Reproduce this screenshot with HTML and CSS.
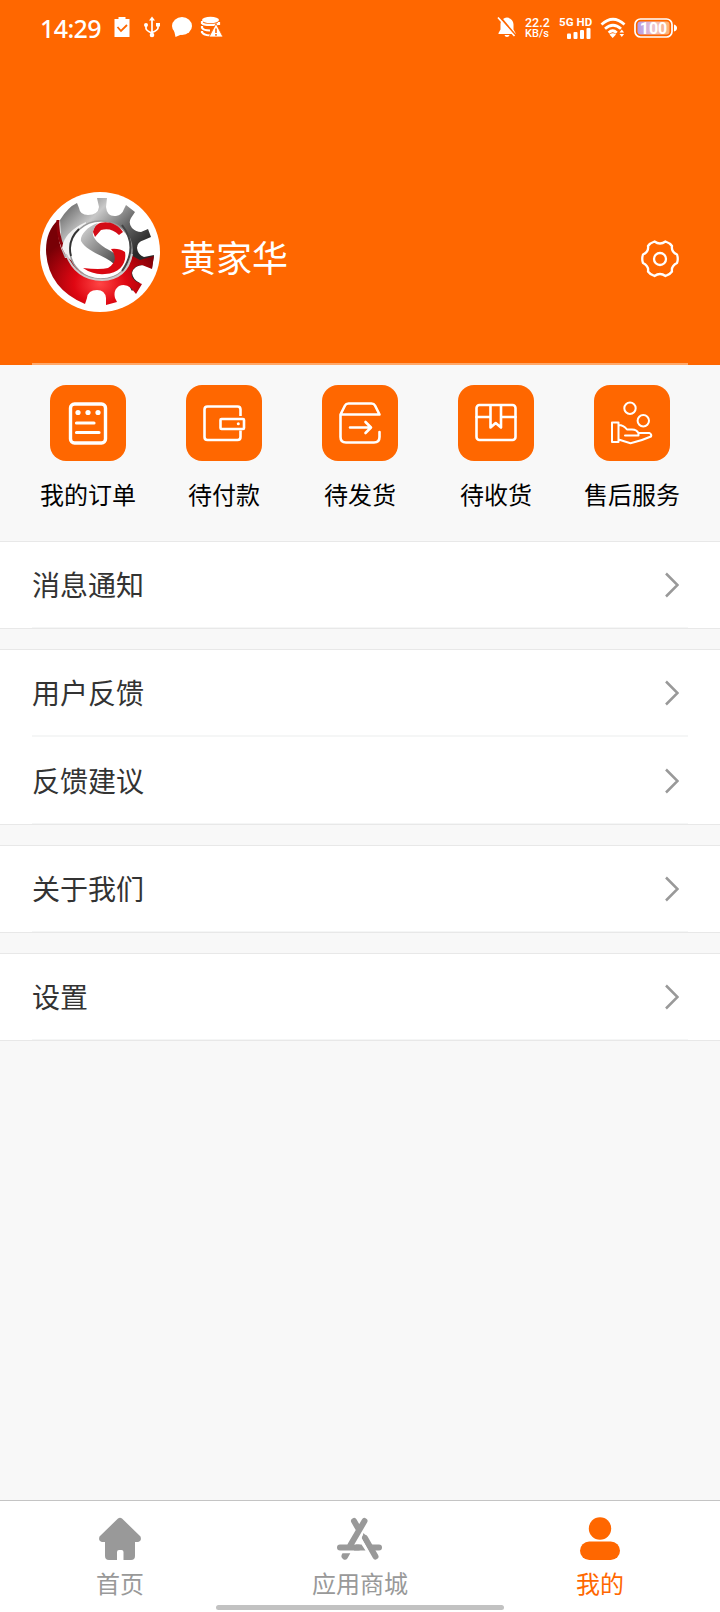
FILE: index.html
```html
<!DOCTYPE html>
<html lang="zh-CN">
<head>
<meta charset="utf-8">
<title>我的</title>
<link rel="stylesheet" href="styles.css">
</head>
<body>
<div class="app">
  <header class="hero">
    <div class="status">
      <span class="time">14:29</span>
      <svg class="sicon" viewBox="0 0 30 24" fill="#fff"><path d="M7.500 3h4V1h7v2h4v18h-15z"/><path d="M10.500 11l3.500 4 6-6" fill="none" stroke="#ff6700" stroke-width="1.800"/></svg>
      <svg class="sicon" viewBox="0 0 30 24" fill="none" stroke="#fff" stroke-width="1.700"><path d="M15 3v15M9 10v2.500q0 2 6 4.500M21 9v3q0 2-6 4.500"/><path d="M15 .5l3 4h-6zM19 7h4v3.600h-4z" fill="#fff" stroke="none"/><circle cx="9" cy="9" r="2" fill="#fff" stroke="none"/><circle cx="15" cy="19" r="2.300" fill="#fff" stroke="none"/></svg>
      <svg class="sicon" viewBox="0 0 30 24" fill="#fff"><ellipse cx="15" cy="10" rx="10" ry="9"/><path d="M7 14l1.500 7 7-3z"/></svg>
      <svg class="sicon" viewBox="0 0 30 24"><ellipse cx="13.500" cy="4" rx="8.500" ry="3.300" fill="#fff"/><path d="M5 7q1 2 8.500 2T22 7M5 11.500q1 3 8 3M5 16q1 3 8 3.500M5 5v3M5 10v2.500M5 15v2M22 6v3" fill="none" stroke="#fff" stroke-width="2.200"/><path d="M19 7.500L26 21H12z" fill="#fff" stroke="#ff6700" stroke-width=".8"/><path d="M19 12.500v4.500M19 18v1.700" stroke="#ff6700" stroke-width="1.600"/></svg>
      <span class="fill"></span>
      <svg class="bell" viewBox="0 0 20 24"><path d="M10 1.500c4 .5 6.500 3.500 6.500 7v5l2 3.500v1h-17v-1l2-3.500v-5c0-3.500 2.500-6.500 6.500-7zM7.500 19h5q-.5 2-2.500 2t-2.500-2z" fill="#fff"/><path d="M3 1l16 19" stroke="#ff6700" stroke-width="2"/><path d="M1 1.500l16.500 18.500" stroke="#fff" stroke-width="1.700"/></svg>
      <span class="speed"><b>22.2</b><b>KB/s</b></span>
      <span class="net"><b>5G HD</b><svg viewBox="0 0 24 11" fill="#fff"><rect y="5.500" width="4" height="5.500" rx="1"/><rect x="6.500" y="4" width="4" height="7" rx="1"/><rect x="13" y="2" width="4" height="9" rx="1"/><rect x="19.500" width="4" height="11" rx="1"/></svg></span>
      <svg class="wifi" viewBox="0 0 26 22" fill="none" stroke="#fff" stroke-width="2.800"><path d="M1.500 7.500q11.500-10.500 23 0M5 11.700q8-7 16 0M8.700 15.700q4-4 8 0"/><path d="M9.500 17.500q3.500-2.500 6.500 0L12.700 21zM21.800 12.500l2.300 3h-4.600zM21.800 20l2.300-3h-4.600z" fill="#fff" stroke="none"/></svg>
      <svg class="battery" viewBox="0 0 44 22"><defs><linearGradient id="charge"><stop stop-color="#b39be8"/><stop offset=".5" stop-color="#ecc3cf"/><stop offset="1" stop-color="#ffb070"/></linearGradient></defs><rect x="1" y="2" width="37" height="18" rx="5.500" fill="none" stroke="#fff" stroke-width="1.700"/><rect x="3.500" y="4.500" width="32" height="13" rx="3" fill="url(#charge)"/><path d="M40 7.500q3 1 3 3.500t-3 3.500z" fill="#fff"/><text x="19.500" y="16.500" text-anchor="middle" class="level">100</text></svg>
    </div>
    <div class="profile">
      <svg class="avatar" viewBox="0 0 120 120">
        <defs>
          <linearGradient id="steel" x1="0" y1="0" x2="1" y2="1"><stop offset=".1" stop-color="#777"/><stop offset=".28" stop-color="#c8c8c8"/><stop offset=".5" stop-color="#666"/><stop offset=".7" stop-color="#292929"/></linearGradient>
          <radialGradient id="ruby" cx=".5" cy=".75" r=".6"><stop stop-color="#ff4545"/><stop offset=".4" stop-color="#df0712"/><stop offset="1" stop-color="#780006"/></radialGradient>
          <linearGradient id="swoosh" x1="0" y1="0" x2="1" y2="1"><stop stop-color="#ddd"/><stop offset="1" stop-color="#444"/></linearGradient>
        </defs>
        <circle cx="60" cy="60" r="60" fill="#fff"/>
        <path d="M20 28Q28 15 37 11L39 16Q40 23 48 23Q58 23 59 15L57 6H67L66 15Q67 25 76 24Q82 23 84 17L86 13 95 20 91 26Q88 31 92 36Q96 40 101 40L108 37 111 45 104 48Q97 50 97 56Q98 63 104 65L114 63 112 76 104 73Q94 73 92 81Q93 88 100 91L92 99 70 60 22 66Z" fill="url(#steel)"/>
        <path d="M18 28Q6 39 6 58Q7 96 45 112L47 106Q48 98 57 98Q65 98 66 106L66 113 77 110 75 106Q73 98 79 94Q85 91 91 96L96 102 102 92 97 90Q90 86 92 79Q95 73 102 73L112 77 114 64 100 68 85 60 25 66Q16 47 18 28Z" fill="url(#ruby)"/>
        <path d="M18 28Q16 54 38 76" fill="none" stroke="#8d0008" stroke-width="3"/>
        <path d="M22 56Q24 40 46 30L40 72Q28 70 22 56Z" fill="#f2f2f2"/>
        <ellipse cx="61" cy="58" rx="31" ry="29" fill="#fff" stroke="#999" stroke-width="1.500"/>
        <path d="M26 62Q36 88 62 88Q87 87 92 62" fill="none" stroke="#ccc" stroke-width="2"/>
        <path d="M82 33Q99 55 82 79" fill="none" stroke="#444" stroke-width="2"/>
        <path d="M31 64Q27 48 39 37" fill="none" stroke="#333" stroke-width="1.800"/>
        <path d="M53 40C54 27 75 27 83 40L79 43Q71 35 61 38L55 45Z" fill="#d30b16"/>
        <path d="M58 31C46 35 40 44 41 49C47 60 64 63 74 72C79 66 77 62 69 58C56 51 50 43 54 37Q55 34 58 31Z" fill="url(#swoosh)"/>
        <path d="M71 57Q79 56 85 60C87 71 80 81 65 82Q53 83 43 76Q60 78 68 76Q80 69 71 57Z" fill="#d90812"/>
      </svg>
      <span class="name">黄家华</span>
      <svg class="gear" viewBox="0 0 40 40" fill="none" stroke="#fff" stroke-width="2.300"><path d="M14.500 2.500Q20 6.500 25.500 2.500Q30 4 32 7Q31 13 37 15.500Q38.500 20 37 24Q31 27 32 32.500Q30 35.500 25.500 37Q20 33 14.500 37Q10 35.500 8 32.500Q9 27 3 24Q1.500 20 3 15.500Q9 13 8 7Q10 4 14.500 2.500Z" stroke-linejoin="round"/><circle cx="20" cy="20" r="6"/></svg>
    </div>
    <div class="rule"></div>
  </header>

  <nav class="orders">
    <a class="order"><svg class="tile" viewBox="0 0 76 76"><rect x="20.500" y="19" width="35" height="39" rx="4" stroke-width="3.400"/><path d="M26.500 38H44M26.500 47.500H49" stroke-width="3.200"/><g fill="#fff" stroke="none"><circle cx="28" cy="27.500" r="2.600"/><circle cx="38" cy="27.500" r="2.600"/><circle cx="48" cy="27.500" r="2.600"/></g></svg><span>我的订单</span></a>
    <a class="order"><svg class="tile" viewBox="0 0 76 76"><path d="M54.500 31V24.500q0-3-3-3H21.500q-3 0-3 3v27.500q0 3 3 3h30q3 0 3-3V45.500" stroke-linecap="butt"/><rect x="34.500" y="34" width="23.500" height="10" rx="1"/><circle cx="52.300" cy="38.800" r="1.500" fill="#fff" stroke="none"/></svg><span>待付款</span></a>
    <a class="order"><svg class="tile" viewBox="0 0 76 76"><path d="M57.500 29.500H18.500L23 20.500q1-2 3.500-2h23q2.500 0 3.500 2zM18.500 30V52q0 5.500 5.500 5.500H52q5.500 0 5.500-5.500V47M28 42.500H48.500M43.500 37l5.500 5.500-5.500 5.500"/></svg><span>待发货</span></a>
    <a class="order"><svg class="tile" viewBox="0 0 76 76"><rect x="18.500" y="20" width="39" height="35" rx="3"/><path d="M18.500 32H32.500M43 32H57.500M32.500 20.500V42.500L37.700 38l5.300 4.500V20.500"/></svg><span>待收货</span></a>
    <a class="order"><svg class="tile hand" viewBox="0 0 76 76"><circle cx="36" cy="23.300" r="5.700"/><circle cx="49.300" cy="35.800" r="5.700"/><path d="M18 37.500h6.500V57H18zM24.500 40q5 0 8.500 4.500h5q5 0 6.500 4v2H31M44.500 48h11q2.500 1.500 1.500 3.500Q47 56 36.500 58.200L24.500 54.500"/></svg><span>售后服务</span></a>
  </nav>

  <main class="groups">
    <section class="group"><a class="row"><span>消息通知</span><svg class="chevron" viewBox="0 0 14 26"><path d="M1 1.500L12.500 13 1 24.500"/></svg></a></section>
    <section class="group double"><a class="row"><span>用户反馈</span><svg class="chevron" viewBox="0 0 14 26"><path d="M1 1.500L12.500 13 1 24.500"/></svg></a><a class="row"><span>反馈建议</span><svg class="chevron" viewBox="0 0 14 26"><path d="M1 1.500L12.500 13 1 24.500"/></svg></a></section>
    <section class="group"><a class="row"><span>关于我们</span><svg class="chevron" viewBox="0 0 14 26"><path d="M1 1.500L12.500 13 1 24.500"/></svg></a></section>
    <section class="group"><a class="row"><span>设置</span><svg class="chevron" viewBox="0 0 14 26"><path d="M1 1.500L12.500 13 1 24.500"/></svg></a></section>
  </main>

  <footer class="tabs">
    <a class="tab"><svg viewBox="0 0 48 44" fill="currentColor"><path d="M22 1.500Q24 0 26 1.500L44.500 19.500Q46 24 42 25H39V39q0 4-4 4H27.500V35q0-2-2-2h-2.500q-2 0-2 2v8H13q-4 0-4-4V25H6Q2 24 3.500 19.500Z"/></svg><span>首页</span></a>
    <a class="tab"><svg viewBox="0 0 48 44" fill="none" stroke="currentColor" stroke-width="6" stroke-linecap="round"><path d="M28.500 4L14.500 28M18 4L22 11"/><path d="M4 30.500H22.500"/><path d="M29 21L39.500 39.500"/><path d="M36 30.500H43"/><path d="M20 27.500h5.500l4 6H18zM27.500 16l4.500 5-3 5-3-5z" fill="currentColor" stroke="none"/><path d="M6.500 36.300h7.800l-2.800 5Q9.500 44 7 42 4 40 6.500 36.300z" fill="currentColor" stroke="none"/><path d="M25.200 22.500L32 35" stroke="#fff" stroke-width="1.800" stroke-linecap="butt"/></svg><span>应用商城</span></a>
    <a class="tab active"><svg viewBox="0 0 48 44" fill="currentColor"><circle cx="24" cy="11.500" r="11.200"/><rect x="4" y="24.500" width="40" height="18.500" rx="9.250"/></svg><span>我的</span></a>
    <div class="home-bar"></div>
  </footer>
</div>
</body>
</html>
```
FILE: styles.css
```css
* { box-sizing: border-box; }
body { margin: 0; font-family: "Noto Sans CJK SC", sans-serif; background: #f8f8f8; }
svg { display: block; flex: none; }
.app { width: 720px; height: 1612px; display: flex; flex-direction: column; overflow: hidden; }

.hero { height: 365px; background: #ff6700; color: #fff; display: flex; flex-direction: column; }
.status { height: 56px; padding-left: 40px; display: flex; align-items: center; }
.time { width: 67px; padding-bottom: 1px; font: 500 25px/30px "Noto Sans", sans-serif; letter-spacing: -.6px; }
.sicon { width: 30px; height: 24px; }
.fill { flex: 1; }
.bell { width: 20px; height: 24px; margin-right: 8px; }
.speed { width: 34px; font: 12.5px/11px Roboto, sans-serif; display: flex; flex-direction: column; }
.speed b { font-weight: 500; white-space: nowrap; }
.speed b + b { font-size: 11px; }
.net { width: 41px; height: 24px; font: 11.5px/12px Roboto, sans-serif; display: flex; flex-direction: column; }
.net b { font-weight: 700; white-space: nowrap; letter-spacing: .1px; }
.net svg { width: 24px; height: 11px; margin-left: 8px; }
.wifi { width: 26px; height: 22px; margin-right: 8px; }
.battery { width: 44px; height: 22px; margin-right: 42px; }
.level { font: 700 16px Roboto, sans-serif; fill: #fff; }

.profile { height: 307px; padding: 136px 40px 0; display: flex; }
.avatar { width: 120px; height: 120px; }
.name { flex: 1; padding-left: 20px; margin-top: 37px; font-size: 36px; line-height: 54px; }
.gear { width: 40px; height: 40px; margin-top: 47px; }
.rule { height: 2px; margin: 0 32px; background: #ffa96b; }

.orders { height: 176px; padding: 20px 20px 0; display: grid; grid-template-columns: repeat(5, 136px); }
.order { display: flex; flex-direction: column; align-items: center; font-size: 24px; line-height: 36px; color: #000; }
.order span { margin-top: 15px; }
.tile { width: 76px; height: 76px; border-radius: 16px; background: #ff6700; fill: none; stroke: #fff; stroke-width: 2.6px; stroke-linecap: round; stroke-linejoin: round; }
.hand { stroke-width: 2px; }

.groups { flex: 1; display: flex; flex-direction: column; gap: 20px; }
.group { height: 88px; background: #fff; border-top: 1px solid #e8e8e8; border-bottom: 1px solid #e8e8e8; padding: 0 32px; }
.double { height: 176px; }
.row { height: 86px; display: flex; align-items: center; justify-content: space-between; padding-right: 9px; border-bottom: 1px solid #f5f6f6; font-size: 28px; color: #333; }
.row span { padding-bottom: 2px; }
.double .row { height: 87px; }
.double .row:first-child { border-bottom-width: 2px; }
.double .row:last-child { padding-top: 2px; }
.chevron { width: 14px; height: 26px; fill: none; stroke: #999; stroke-width: 2.5px; }

.tabs { height: 112px; background: #fff; border-top: 1px solid #c4c4c4; display: grid; grid-template-columns: repeat(3, 1fr); grid-template-rows: 104px 5px; }
.tab { display: flex; flex-direction: column; align-items: center; padding-top: 16px; color: #999; font-size: 24px; line-height: 36px; }
.tab svg { width: 48px; height: 44px; }
.tab span { margin-top: 4px; }
.active { color: #ff6700; }
.home-bar { grid-column: 1 / -1; justify-self: center; width: 288px; height: 5px; border-radius: 3px; background: #c2c2c2; }
```
